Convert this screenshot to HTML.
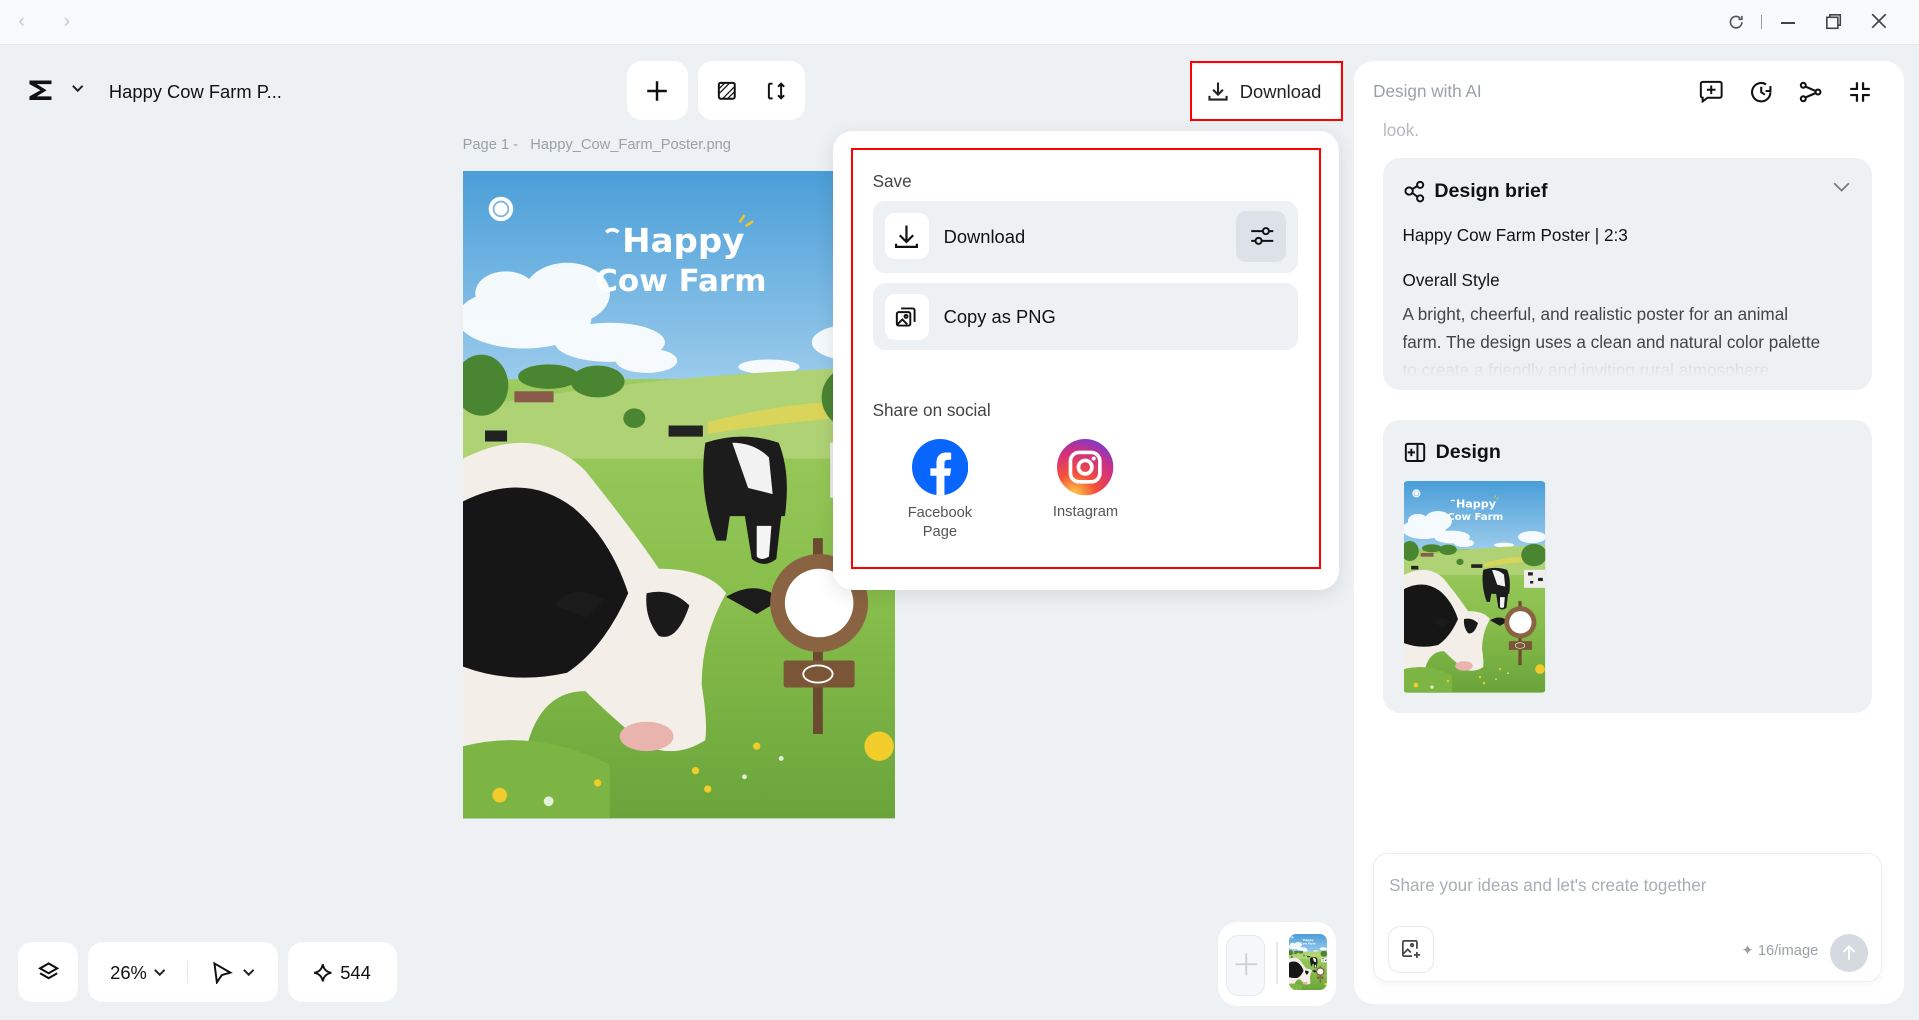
<!DOCTYPE html>
<html><head><meta charset="utf-8">
<style>
*{box-sizing:border-box;margin:0;padding:0}
html,body{width:1919px;height:1020px;overflow:hidden}
body{background:#eef1f4;font-family:"Liberation Sans",sans-serif;color:#1a1a1a}
#r{zoom:1.22385;width:1568px;height:834px;position:relative;background:#eef1f4}
.a{position:absolute}
.card{position:absolute;background:#fff;border-radius:12px}
svg{display:block}
</style></head><body><div id="r">
<!-- title bar -->
<div class="a" style="left:0;top:0;width:1568px;height:37px;background:#f8f9fa;border-bottom:1px solid #e6e8eb"></div>
<div class="a" style="left:15px;top:8px;color:#c5c8cc;font-size:16px">&#x2039;</div>
<div class="a" style="left:52px;top:8px;color:#c5c8cc;font-size:16px">&#x203A;</div>
<svg class="a" style="left:1411px;top:11px" width="15" height="15" viewBox="0 0 16 16" fill="none" stroke="#555" stroke-width="1.4"><path d="M13 8a5 5 0 1 1-1.5-3.6M13 2.5v3h-3"/></svg>
<div class="a" style="left:1439px;top:12px;width:1px;height:12px;background:#999"></div>
<div class="a" style="left:1455px;top:18px;width:12px;height:1.4px;background:#444"></div>
<svg class="a" style="left:1491px;top:11px" width="14" height="14" viewBox="0 0 14 14" fill="none" stroke="#444" stroke-width="1.3"><rect x="1.5" y="3.5" width="9" height="9"/><path d="M4 3.5V1.5h8.5V10h-2"/></svg>
<svg class="a" style="left:1529px;top:11px" width="13" height="13" viewBox="0 0 13 13" stroke="#444" stroke-width="1.4"><path d="M1 1l11 11M12 1L1 12"/></svg>

<!-- left header -->
<div class="card" style="left:5px;top:50px;width:236px;height:48px;background:#eef1f4"></div>
<svg class="a" style="left:22px;top:64px" width="22" height="20" viewBox="0 0 22 20"><path d="M2 2h18v3H8l8 5-8 5h12v3H2v-3l9-5-9-5z" fill="#111"/></svg>
<svg class="a" style="left:58px;top:69px" width="11" height="8" viewBox="0 0 11 8" fill="none" stroke="#222" stroke-width="1.6"><path d="M1.5 1.5l4 4 4-4"/></svg>
<div class="a" style="left:89px;top:66px;font-size:15px;color:#111">Happy Cow Farm P...</div>

<div class="card" style="left:512px;top:50px;width:50px;height:48px;border-radius:12px"></div>
<svg class="a" style="left:528px;top:65px" width="18" height="18" viewBox="0 0 18 18" stroke="#111" stroke-width="2"><path d="M9 1v16M1 9h16"/></svg>
<div class="card" style="left:570px;top:50px;width:88px;height:48px"></div>
<svg class="a" style="left:586px;top:66px" width="16" height="16" viewBox="0 0 16 16" fill="none" stroke="#111" stroke-width="1.6"><rect x="1.5" y="1.5" width="13" height="13" rx="1.5"/><path d="M2 10l8-8M5 14l9-9M2 6l4-4M9 14l5-5" stroke-width="1"/></svg>
<svg class="a" style="left:624px;top:65px" width="18" height="18" viewBox="0 0 18 18" fill="none" stroke="#111" stroke-width="1.6"><path d="M4 3v12M4 3h3M4 15h3M14 3v12M11.5 5.5L14 3l2.5 2.5M11.5 12.5L14 15l2.5-2.5"/></svg>

<div class="a" style="left:378px;top:112px;font-size:12px;color:#9aa0a7">Page 1 -&nbsp;&nbsp;&nbsp;Happy_Cow_Farm_Poster.png</div>

<!-- poster -->
<svg class="a" style="left:378px;top:140px" width="353" height="529" viewBox="0 0 353 529" id="poster">
<defs>
<linearGradient id="sky" x1="0" y1="0" x2="0" y2="1"><stop offset="0" stop-color="#4a9ed8"/><stop offset="1" stop-color="#a8d3ef"/></linearGradient>
<linearGradient id="gr" x1="0" y1="0" x2="0" y2="1"><stop offset="0" stop-color="#9ccc60"/><stop offset=".5" stop-color="#88be4c"/><stop offset="1" stop-color="#6aa43a"/></linearGradient>
</defs>
<rect width="353" height="200" fill="url(#sky)"/>
<g fill="#fff" opacity=".92"><ellipse cx="50" cy="120" rx="55" ry="25"/><ellipse cx="85" cy="100" rx="35" ry="25"/><ellipse cx="35" cy="100" rx="25" ry="18"/><ellipse cx="120" cy="140" rx="45" ry="16"/><ellipse cx="150" cy="155" rx="25" ry="10"/><ellipse cx="320" cy="140" rx="35" ry="15"/><ellipse cx="250" cy="160" rx="25" ry="6"/></g>
<rect y="170" width="353" height="359" fill="url(#gr)"/>
<path d="M0 195 Q150 165 353 160 V235 H0Z" fill="#afd274"/>
<path d="M200 205 Q280 185 330 190 L330 200 Q260 205 200 215Z" fill="#d9d45a"/>
<g fill="#4a8532"><ellipse cx="15" cy="175" rx="22" ry="25"/><ellipse cx="70" cy="168" rx="25" ry="10"/><ellipse cx="110" cy="172" rx="22" ry="13"/><ellipse cx="325" cy="185" rx="32" ry="28"/><ellipse cx="140" cy="202" rx="9" ry="8"/></g>
<rect x="42" y="180" width="32" height="9" fill="#8a5a4a"/>
<!-- mid cows -->
<path d="M168 208 h28 v9 h-28z" fill="#222"/>
<path d="M198 222 q30 -10 60 0 q10 25 5 60 l-8 0 l-2 25 l-8 0 l-2 -25 l-25 0 l-3 20 h-8 q-15 -40 -9 -80z" fill="#1c1c1c"/>
<path d="M220 222 q18 0 30 12 l3 30 -20 -5z" fill="#f2f2f2"/>
<path d="M230 280 q15 -8 30 2 l-4 35 q-10 8 -20 0z" fill="#1b1b1b"/><path d="M240 290 l12 0 l-2 25 q-6 4 -10 0z" fill="#f4f4f4"/>
<path d="M300 222 h53 v45 h-53z" fill="#eee"/><path d="M310 228 h12 v8 h-12zM335 242h12v8h-12zM315 250h8v6h-8z" fill="#222"/>
<path d="M18 212 h18 v9 h-18z" fill="#222"/>
<!-- big cow -->
<path d="M0 235 Q60 205 100 245 Q140 295 160 325 Q200 325 215 345 Q195 380 195 420 Q200 450 198 465 Q175 480 150 470 Q120 445 100 425 Q60 425 50 480 L0 480Z" fill="#f3efe8"/>
<path d="M0 270 Q50 245 90 275 Q120 300 135 345 Q115 390 85 410 Q40 420 0 405Z" fill="#161616"/>
<path d="M150 345 Q170 340 185 355 Q175 385 160 380 Q148 365 150 345z" fill="#1a1a1a"/>
<path d="M215 348 q25 -15 45 2 l-20 12z" fill="#1b1b1b"/>
<path d="M115 350 q-25 -15 -40 5 l25 10z" fill="#1b1b1b"/>
<ellipse cx="150" cy="462" rx="22" ry="12" fill="#e8b4ad"/>
<path d="M0 470 Q60 455 120 485 L120 529 H0Z" fill="#7cb544"/>
<!-- sign -->
<rect x="286" y="300" width="8" height="160" fill="#6b4a30"/>
<circle cx="291" cy="353" r="40" fill="#8a6342"/><circle cx="291" cy="353" r="28" fill="#fff"/>
<rect x="262" y="400" width="58" height="22" rx="2" fill="#7a5636"/><ellipse cx="290" cy="411" rx="12" ry="7" fill="none" stroke="#fff" stroke-width="1.5"/>
<!-- flowers -->
<g fill="#f2cc2a"><circle cx="340" cy="470" r="12"/><circle cx="30" cy="510" r="6"/><circle cx="190" cy="490" r="3"/><circle cx="200" cy="505" r="3"/><circle cx="240" cy="470" r="3"/><circle cx="110" cy="500" r="3"/></g>
<g fill="#fff" opacity=".8"><circle cx="70" cy="515" r="4"/><circle cx="230" cy="495" r="2"/><circle cx="260" cy="480" r="2"/></g>
<circle cx="31" cy="31" r="10" fill="#fff"/><circle cx="31" cy="31" r="6" fill="none" stroke="#7fb4e0" stroke-width="1.5"/>
<text x="180" y="66" text-anchor="middle" font-family="DejaVu Sans" font-weight="bold" font-size="27" fill="#fff" textLength="100" lengthAdjust="spacingAndGlyphs">Happy</text>
<text x="178" y="98" text-anchor="middle" font-family="DejaVu Sans" font-weight="bold" font-size="25" fill="#fff" textLength="140" lengthAdjust="spacingAndGlyphs">Cow Farm</text>
<path d="M226 42 l4 -6 M231 45 l6 -4" stroke="#f3c623" stroke-width="2"/>
<path d="M117 50 q5 -4 10 0" stroke="#fff" stroke-width="3" fill="none"/>
</svg>

<!-- download button -->
<div class="card" style="left:974px;top:52px;width:121px;height:45px;border-radius:4px"></div>
<div class="a" style="left:972px;top:50px;width:125px;height:49px;border:2px solid #f00"></div>
<svg class="a" style="left:986px;top:65px" width="18" height="18" viewBox="0 0 18 18" fill="none" stroke="#222" stroke-width="1.7"><path d="M9 2v10M5 8l4 4 4-4M2 13v3h14v-3"/></svg>
<div class="a" style="left:1013px;top:66px;font-size:15px;color:#222">Download</div>

<!-- popup -->
<div class="card" style="left:681px;top:107px;width:413px;height:375px;border-radius:16px;box-shadow:0 4px 16px rgba(0,0,0,.1)"></div>
<div class="a" style="left:695px;top:121px;width:384px;height:344px;border:2px solid #f00"></div>
<div class="a" style="left:713px;top:140px;font-size:14px;color:#444">Save</div>
<div class="a" style="left:713px;top:164px;width:348px;height:59px;background:#eef1f4;border-radius:10px"></div>
<div class="a" style="left:723px;top:174px;width:36px;height:38px;background:#fff;border-radius:8px"></div>
<svg class="a" style="left:730px;top:182px" width="22" height="22" viewBox="0 0 22 22" fill="none" stroke="#111" stroke-width="1.8"><path d="M11 2v13M5.5 10l5.5 5.5 5.5-5.5M2.5 17v2.5h17V17"/></svg>
<div class="a" style="left:771px;top:185px;font-size:15px;color:#111">Download</div>
<div class="a" style="left:1010px;top:172px;width:41px;height:42px;background:#dde2e8;border-radius:8px"></div>
<svg class="a" style="left:1021px;top:184px" width="20" height="18" viewBox="0 0 20 18" fill="none" stroke="#111" stroke-width="1.6"><path d="M1 5h18M1 13h18"/><circle cx="13" cy="5" r="2.5" fill="#dde2e8"/><circle cx="7" cy="13" r="2.5" fill="#dde2e8"/></svg>
<div class="a" style="left:713px;top:231px;width:348px;height:55px;background:#eef1f4;border-radius:10px"></div>
<div class="a" style="left:723px;top:240px;width:36px;height:38px;background:#fff;border-radius:8px"></div>
<svg class="a" style="left:731px;top:250px" width="18" height="18" viewBox="0 0 18 18" fill="none" stroke="#111" stroke-width="1.6"><rect x="1.5" y="5" width="11" height="11" rx="1.5"/><path d="M5 2h9.5a1.5 1.5 0 0 1 1.5 1.5V13M2 15l4-4 4 4"/><circle cx="9" cy="8.5" r="1.2"/></svg>
<div class="a" style="left:771px;top:250px;font-size:15px;color:#111">Copy as PNG</div>
<div class="a" style="left:713px;top:327px;font-size:14px;color:#444">Share on social</div>
<svg class="a" style="left:745px;top:359px" width="46" height="46" viewBox="0 0 46 46"><circle cx="23" cy="23" r="23" fill="#0866ff"/><path d="M20 46V30h-5v-6h5v-5c0-5 3-8 8-8 2 0 4 .3 4 .3V17h-2.5c-2.5 0-3 1.5-3 3v4h5.5l-1 6h-4.5v16z" fill="#fff"/></svg>
<div class="a" style="left:728px;top:412px;width:80px;text-align:center;font-size:12px;color:#555;line-height:15px">Facebook<br>Page</div>
<svg class="a" style="left:864px;top:359px" width="46" height="46" viewBox="0 0 46 46"><defs><radialGradient id="ig" cx=".3" cy="1" r="1.1"><stop offset="0" stop-color="#fdd34a"/><stop offset=".35" stop-color="#f4503a"/><stop offset=".7" stop-color="#d2307e"/><stop offset="1" stop-color="#6f3bd8"/></radialGradient></defs><circle cx="23" cy="23" r="23" fill="url(#ig)"/><rect x="11" y="11" width="24" height="24" rx="7" fill="none" stroke="#fff" stroke-width="3"/><circle cx="23" cy="23" r="5.5" fill="none" stroke="#fff" stroke-width="3"/><circle cx="30" cy="16" r="1.7" fill="#fff"/></svg>
<div class="a" style="left:847px;top:412px;width:80px;text-align:center;font-size:12px;color:#555">Instagram</div>

<!-- right panel -->
<div class="card" style="left:1106px;top:50px;width:450px;height:770px;border-radius:16px"></div>
<div class="a" style="left:1122px;top:66px;font-size:14px;color:#9aa0a7">Design with AI</div>
<svg class="a" style="left:1388px;top:65px" width="20" height="19" viewBox="0 0 20 19" fill="none" stroke="#111" stroke-width="1.6"><path d="M3 1.5h14a1.5 1.5 0 0 1 1.5 1.5v10a1.5 1.5 0 0 1-1.5 1.5H7l-4 3v-3H3A1.5 1.5 0 0 1 1.5 13V3A1.5 1.5 0 0 1 3 1.5zM10 4.5v7M6.5 8h7"/></svg>
<svg class="a" style="left:1429px;top:65px" width="20" height="20" viewBox="0 0 20 20" fill="none" stroke="#111" stroke-width="1.7"><path d="M17.5 10A7.5 7.5 0 1 1 14 3.6M10 5.5V10l3 2M17.5 5v4h-4"/></svg>
<svg class="a" style="left:1470px;top:66px" width="19" height="18" viewBox="0 0 19 18" fill="none" stroke="#111" stroke-width="1.7"><circle cx="3.5" cy="3.5" r="2"/><circle cx="3.5" cy="14.5" r="2"/><circle cx="15.5" cy="9" r="2"/><path d="M5.2 4.5l8.5 3.7M5.2 13.5l8.5-3.7"/></svg>
<svg class="a" style="left:1511px;top:66px" width="18" height="18" viewBox="0 0 18 18" fill="none" stroke="#111" stroke-width="1.8"><path d="M6.5 1v5.5H1M11.5 1v5.5H17M6.5 17v-5.5H1M11.5 17v-5.5H17"/></svg>
<div class="a" style="left:1130px;top:98px;font-size:14px;color:#b5b9be">look.</div>

<div class="a" style="left:1130px;top:129px;width:400px;height:190px;background:#eef1f4;border-radius:14px;overflow:hidden">
<svg class="a" style="left:16px;top:18px" width="20" height="19" viewBox="0 0 20 19" fill="none" stroke="#111" stroke-width="1.6"><circle cx="5" cy="9" r="3"/><circle cx="14" cy="4" r="2.5"/><circle cx="14" cy="15" r="2.5"/><path d="M7.5 7.5l4-2.5M7.5 10.5l4 3"/></svg>
<div class="a" style="left:42px;top:18px;font-size:16px;font-weight:bold;color:#111">Design brief</div>
<svg class="a" style="left:368px;top:20px" width="14" height="9" viewBox="0 0 14 9" fill="none" stroke="#777" stroke-width="1.4"><path d="M1 1l6 6 6-6"/></svg>
<div class="a" style="left:16px;top:55px;font-size:14px;color:#111">Happy Cow Farm Poster | 2:3</div>
<div class="a" style="left:16px;top:92px;font-size:14px;color:#111">Overall Style</div>
<div class="a" style="left:16px;top:116px;width:348px;font-size:14px;line-height:23px;color:#444">A bright, cheerful, and realistic poster for an animal farm. The design uses a clean and natural color palette <span style="color:#c8ccd1">to create a friendly and inviting rural atmosphere</span></div>
<div class="a" style="left:0;top:160px;width:400px;height:30px;background:linear-gradient(rgba(238,241,244,0),#eef1f4 70%)"></div>
</div>

<div class="a" style="left:1130px;top:343px;width:400px;height:240px;background:#eef1f4;border-radius:14px"></div>
<svg class="a" style="left:1147px;top:361px" width="18" height="17" viewBox="0 0 18 17" fill="none" stroke="#111" stroke-width="1.6"><rect x="1.5" y="1.5" width="15" height="14" rx="1.5"/><path d="M11 1.5v14M6 5.5v6M3 8.5h6"/></svg>
<div class="a" style="left:1173px;top:360px;font-size:16px;font-weight:bold;color:#111">Design</div>
<div class="a" style="left:1146px;top:393px;width:117px;height:173px;overflow:hidden;border-radius:4px">
<svg width="117" height="173" viewBox="0 0 353 529"><use href="#poster"/></svg>
</div>

<!-- chat input -->
<div class="a" style="left:1122px;top:697px;width:416px;height:105px;background:#fff;border:1px solid #eceef1;border-radius:12px;box-shadow:0 2px 6px rgba(0,0,0,.04)"></div>
<div class="a" style="left:1135px;top:715px;font-size:14px;color:#a8adb4">Share your ideas and let's create together</div>
<div class="a" style="left:1134px;top:757px;width:38px;height:38px;border:1px solid #e6e8eb;border-radius:10px"></div>
<svg class="a" style="left:1145px;top:767px" width="17" height="17" viewBox="0 0 17 17" fill="none" stroke="#444" stroke-width="1.4"><path d="M9 14H2.5a1 1 0 0 1-1-1V2.5a1 1 0 0 1 1-1H12a1 1 0 0 1 1 1V8M2 12l3.5-3.5L8 11"/><circle cx="9" cy="5" r="1"/><path d="M13 10.5v5M10.5 13h5"/></svg>
<div class="a" style="left:1423px;top:770px;font-size:12px;color:#9aa0a7">&#x2726; 16/image</div>
<div class="a" style="left:1495px;top:763px;width:31px;height:31px;border-radius:50%;background:#d5dae1"></div>
<svg class="a" style="left:1504px;top:771px" width="13" height="14" viewBox="0 0 13 14" fill="none" stroke="#fff" stroke-width="1.5"><path d="M6.5 13V2M2 6.5l4.5-4.5 4.5 4.5"/></svg>

<!-- bottom pages -->
<div class="card" style="left:995px;top:753px;width:97px;height:69px;border-radius:16px"></div>
<div class="a" style="left:1002px;top:764px;width:32px;height:50px;border:1px solid #e6e8eb;border-radius:10px;background:#f6f7f9"></div>
<svg class="a" style="left:1008px;top:778px" width="20" height="20" viewBox="0 0 20 20" stroke="#ccd0d5" stroke-width="1.5"><path d="M10 1v18M1 10h18"/></svg>
<div class="a" style="left:1043px;top:770px;width:1px;height:34px;background:#e6e8eb"></div>
<div class="a" style="left:1053px;top:763px;width:31px;height:46px;overflow:hidden;border-radius:6px">
<svg width="31" height="46" viewBox="0 0 353 529" preserveAspectRatio="none"><use href="#poster"/></svg>
</div>

<!-- bottom toolbar -->
<div class="card" style="left:15px;top:770px;width:49px;height:49px"></div>
<svg class="a" style="left:30px;top:785px" width="19" height="19" viewBox="0 0 19 19" fill="none" stroke="#111" stroke-width="1.7"><path d="M9.5 2l7 4-7 4-7-4zM2.5 10l7 4 7-4"/></svg>
<div class="card" style="left:72px;top:770px;width:155px;height:49px"></div>
<div class="a" style="left:90px;top:786px;font-size:15px;color:#111">26%</div>
<svg class="a" style="left:125px;top:791px" width="11" height="8" viewBox="0 0 11 8" fill="none" stroke="#222" stroke-width="1.6"><path d="M1.5 1.5l4 4 4-4"/></svg>
<div class="a" style="left:153px;top:785px;width:1px;height:18px;background:#e3e5e8"></div>
<svg class="a" style="left:173px;top:785px" width="17" height="19" viewBox="0 0 17 19" fill="none" stroke="#111" stroke-width="1.6"><path d="M2 2l13 7.5-7 2-4 6z"/></svg>
<svg class="a" style="left:198px;top:791px" width="11" height="8" viewBox="0 0 11 8" fill="none" stroke="#222" stroke-width="1.6"><path d="M1.5 1.5l4 4 4-4"/></svg>
<div class="card" style="left:235px;top:770px;width:89px;height:49px"></div>
<svg class="a" style="left:256px;top:787px" width="16" height="16" viewBox="0 0 16 16" fill="none" stroke="#111" stroke-width="1.6"><path d="M8 1Q9 7 15 8Q9 9 8 15Q7 9 1 8Q7 7 8 1z"/></svg>
<div class="a" style="left:278px;top:786px;font-size:15px;color:#111">544</div>
</div></body></html>
